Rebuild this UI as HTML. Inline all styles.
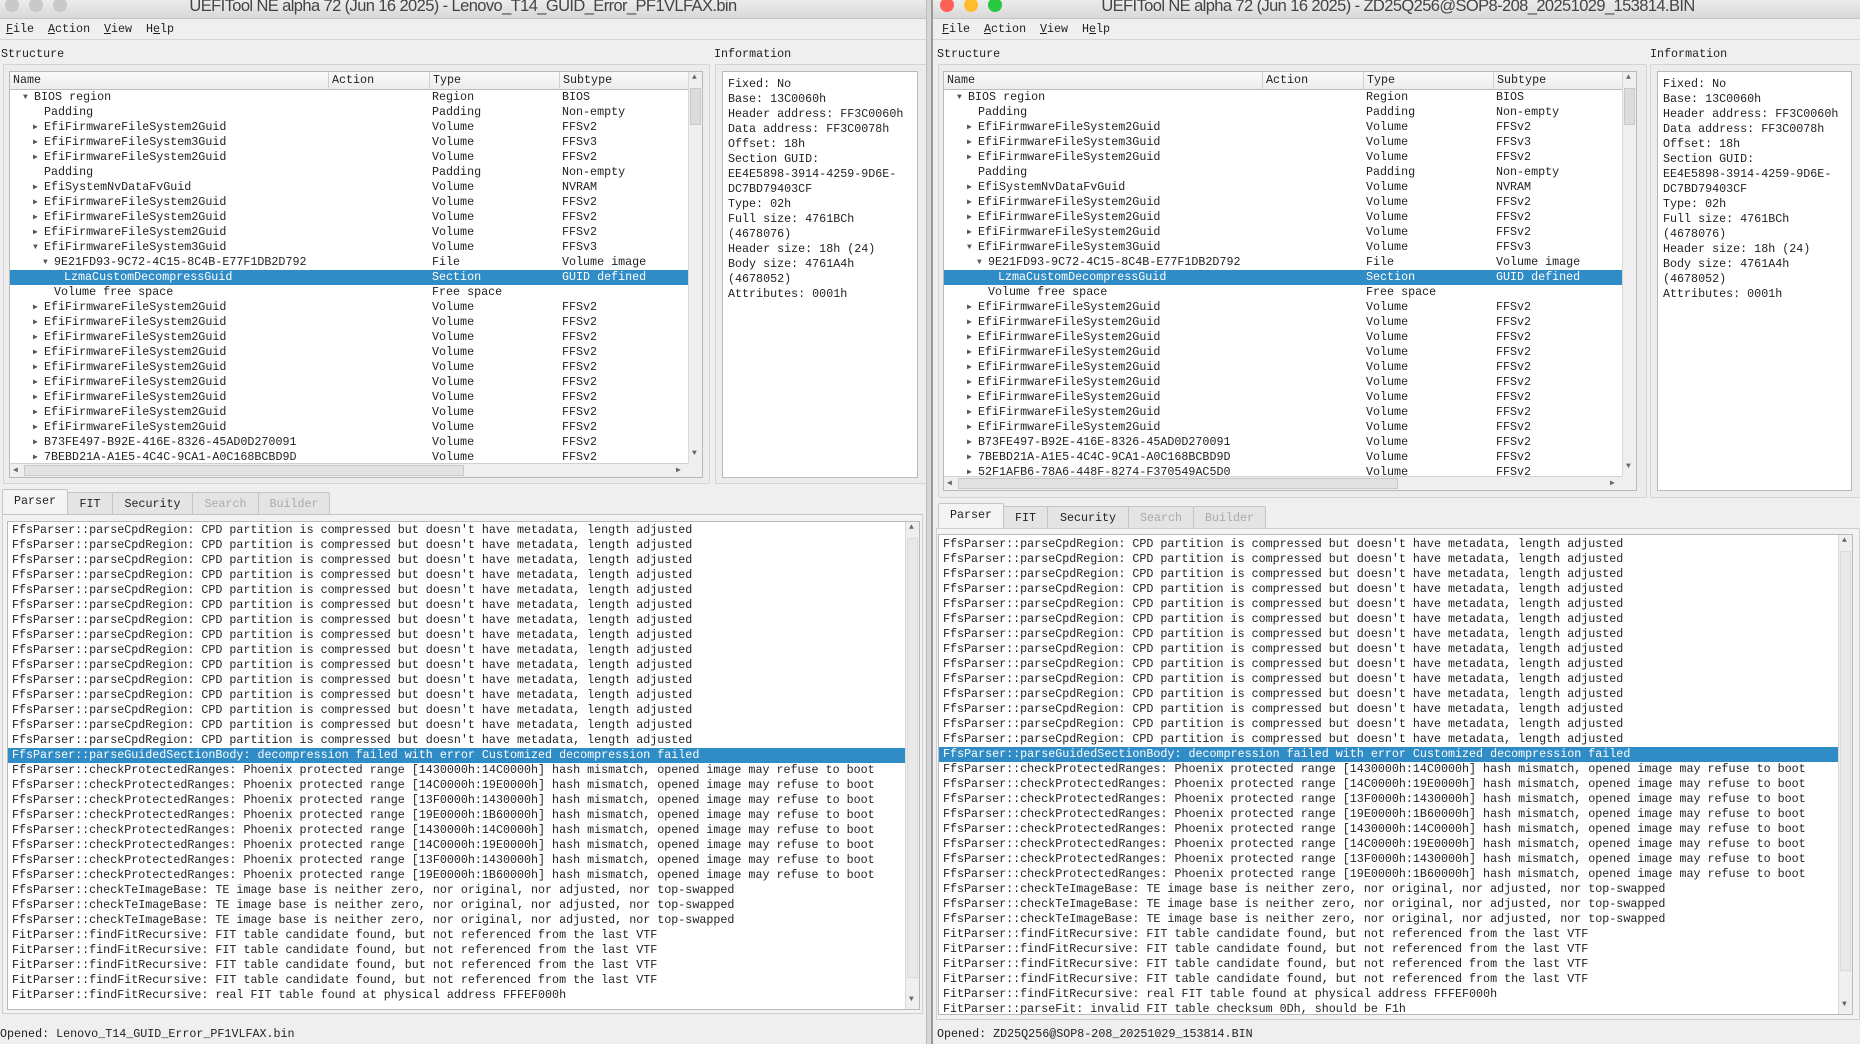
<!DOCTYPE html>
<html><head><meta charset="utf-8">
<style>
*{box-sizing:border-box;margin:0;padding:0}
body{width:1860px;height:1044px;overflow:hidden;background:#efefef;font-family:"Liberation Mono",monospace;font-size:11.7px;color:#222;position:relative}
.win{position:absolute;top:0;height:1044px;background:#efefef;overflow:hidden}
.tb{position:absolute;left:0;right:0;top:0;height:19px;background:linear-gradient(#ececec,#d8d8d8);border-bottom:1px solid #c4c4c4}
.tt{position:absolute;left:0;right:0;top:-3px;text-align:center;font-family:"Liberation Sans",sans-serif;font-size:16.5px;color:#444;letter-spacing:-0.6px;white-space:nowrap}
.dot{position:absolute;top:-2px;width:14px;height:14px;border-radius:50%;background:#c8c8c8}
.menu{position:absolute;left:0;right:0;top:19px;height:21px;border-bottom:1px solid #d6d6d6;line-height:21px}
.menu span{position:absolute;top:0}
.lbl{position:absolute;top:46px;line-height:16px}
.frame{position:absolute;border:1px solid #d4d4d4;border-radius:2px;background:#ececec}
.box{position:absolute;background:#fff;border:1px solid #b9b9b9;overflow:hidden}
.hdr{position:absolute;left:0;top:0;height:18px;background:linear-gradient(#fafafa,#ececec);border-bottom:1px solid #bdbdbd;line-height:17px}
.hdr span{position:absolute;top:0;height:18px;border-left:1px solid #d0d0d0;padding-left:3px}
.rows{position:absolute;left:0;top:18px}
.r{position:relative;height:15px;line-height:15px;white-space:pre}
.r span{position:absolute;top:0}
.r.sel{background:#308cc6;color:#fff}
.a{font-size:8px;color:#555}
.sel .a{color:#fff}
.vs{position:absolute;right:0;width:14px;background:#efefef;border-left:1px solid #d8d8d8}
.vs i{position:absolute;left:1px;right:1px;background:#dcdcdc;border:1px solid #c8c8c8}
.hs{position:absolute;left:0;height:14px;background:#efefef;border-top:1px solid #d0d0d0}
.hs i{position:absolute;top:1px;bottom:1px;background:#e2e2e2;border:1px solid #c8c8c8}
.ar{position:absolute;font-size:8px;color:#666}
.info{position:absolute;line-height:15px;white-space:pre}
.tab{position:absolute;height:23px;border:1px solid #c4c4c4;border-bottom:none;background:#e4e4e4;text-align:center;line-height:22px;border-radius:2px 2px 0 0}
.tab.on{background:#f4f4f4;height:26px}
.tab.dis{color:#aaa}
.log{position:absolute;line-height:15px;white-space:normal}
.log div{height:15px;white-space:pre;padding-left:4px}
.log .sel{background:#308cc6;color:#fff}
.st{position:absolute;top:1026px;line-height:16px;white-space:pre}
</style></head><body>

<!-- LEFT WINDOW -->
<div class="win" style="left:0;width:926px">
 <div class="tb"><div class="dot" style="left:5px"></div><div class="dot" style="left:29px"></div><div class="dot" style="left:53px"></div>
 <div class="tt" style="left:0;width:926px">UEFITool NE alpha 72 (Jun 16 2025) - Lenovo_T14_GUID_Error_PF1VLFAX.bin</div></div>
 <div class="menu"><span style="left:6px"><u>F</u>ile</span><span style="left:48px"><u>A</u>ction</span><span style="left:104px"><u>V</u>iew</span><span style="left:146px">H<u>e</u>lp</span></div>
 <div class="lbl" style="left:1px">Structure</div>
 <div class="lbl" style="left:714px">Information</div>
 <div class="frame" style="left:3px;top:64px;width:707px;height:420px"></div>
 <div class="frame" style="left:715px;top:64px;width:214px;height:420px"></div>
 <div class="box" style="left:9px;top:71px;width:694px;height:407px">
  <div class="hdr" style="width:678px"><span style="left:0;border:none">Name</span><span style="left:318px">Action</span><span style="left:419px">Type</span><span style="left:549px">Subtype</span></div>
  <div class="rows" style="width:678px">
   <div class="r"><span class="a" style="left:13px">▼</span><span style="left:24px">BIOS region</span><span style="left:422px">Region</span><span style="left:552px">BIOS</span></div>
   <div class="r"><span style="left:34px">Padding</span><span style="left:422px">Padding</span><span style="left:552px">Non-empty</span></div>
   <div class="r"><span class="a" style="left:23px">▶</span><span style="left:34px">EfiFirmwareFileSystem2Guid</span><span style="left:422px">Volume</span><span style="left:552px">FFSv2</span></div>
   <div class="r"><span class="a" style="left:23px">▶</span><span style="left:34px">EfiFirmwareFileSystem3Guid</span><span style="left:422px">Volume</span><span style="left:552px">FFSv3</span></div>
   <div class="r"><span class="a" style="left:23px">▶</span><span style="left:34px">EfiFirmwareFileSystem2Guid</span><span style="left:422px">Volume</span><span style="left:552px">FFSv2</span></div>
   <div class="r"><span style="left:34px">Padding</span><span style="left:422px">Padding</span><span style="left:552px">Non-empty</span></div>
   <div class="r"><span class="a" style="left:23px">▶</span><span style="left:34px">EfiSystemNvDataFvGuid</span><span style="left:422px">Volume</span><span style="left:552px">NVRAM</span></div>
   <div class="r"><span class="a" style="left:23px">▶</span><span style="left:34px">EfiFirmwareFileSystem2Guid</span><span style="left:422px">Volume</span><span style="left:552px">FFSv2</span></div>
   <div class="r"><span class="a" style="left:23px">▶</span><span style="left:34px">EfiFirmwareFileSystem2Guid</span><span style="left:422px">Volume</span><span style="left:552px">FFSv2</span></div>
   <div class="r"><span class="a" style="left:23px">▶</span><span style="left:34px">EfiFirmwareFileSystem2Guid</span><span style="left:422px">Volume</span><span style="left:552px">FFSv2</span></div>
   <div class="r"><span class="a" style="left:23px">▼</span><span style="left:34px">EfiFirmwareFileSystem3Guid</span><span style="left:422px">Volume</span><span style="left:552px">FFSv3</span></div>
   <div class="r"><span class="a" style="left:33px">▼</span><span style="left:44px">9E21FD93-9C72-4C15-8C4B-E77F1DB2D792</span><span style="left:422px">File</span><span style="left:552px">Volume image</span></div>
   <div class="r sel"><span style="left:54px">LzmaCustomDecompressGuid</span><span style="left:422px">Section</span><span style="left:552px">GUID defined</span></div>
   <div class="r"><span style="left:44px">Volume free space</span><span style="left:422px">Free space</span></div>
   <div class="r"><span class="a" style="left:23px">▶</span><span style="left:34px">EfiFirmwareFileSystem2Guid</span><span style="left:422px">Volume</span><span style="left:552px">FFSv2</span></div>
   <div class="r"><span class="a" style="left:23px">▶</span><span style="left:34px">EfiFirmwareFileSystem2Guid</span><span style="left:422px">Volume</span><span style="left:552px">FFSv2</span></div>
   <div class="r"><span class="a" style="left:23px">▶</span><span style="left:34px">EfiFirmwareFileSystem2Guid</span><span style="left:422px">Volume</span><span style="left:552px">FFSv2</span></div>
   <div class="r"><span class="a" style="left:23px">▶</span><span style="left:34px">EfiFirmwareFileSystem2Guid</span><span style="left:422px">Volume</span><span style="left:552px">FFSv2</span></div>
   <div class="r"><span class="a" style="left:23px">▶</span><span style="left:34px">EfiFirmwareFileSystem2Guid</span><span style="left:422px">Volume</span><span style="left:552px">FFSv2</span></div>
   <div class="r"><span class="a" style="left:23px">▶</span><span style="left:34px">EfiFirmwareFileSystem2Guid</span><span style="left:422px">Volume</span><span style="left:552px">FFSv2</span></div>
   <div class="r"><span class="a" style="left:23px">▶</span><span style="left:34px">EfiFirmwareFileSystem2Guid</span><span style="left:422px">Volume</span><span style="left:552px">FFSv2</span></div>
   <div class="r"><span class="a" style="left:23px">▶</span><span style="left:34px">EfiFirmwareFileSystem2Guid</span><span style="left:422px">Volume</span><span style="left:552px">FFSv2</span></div>
   <div class="r"><span class="a" style="left:23px">▶</span><span style="left:34px">EfiFirmwareFileSystem2Guid</span><span style="left:422px">Volume</span><span style="left:552px">FFSv2</span></div>
   <div class="r"><span class="a" style="left:23px">▶</span><span style="left:34px">B73FE497-B92E-416E-8326-45AD0D270091</span><span style="left:422px">Volume</span><span style="left:552px">FFSv2</span></div>
   <div class="r"><span class="a" style="left:23px">▶</span><span style="left:34px">7BEBD21A-A1E5-4C4C-9CA1-A0C168BCBD9D</span><span style="left:422px">Volume</span><span style="left:552px">FFSv2</span></div>
  </div>
  <div class="hs" style="top:391px;width:678px"><i style="left:14px;width:440px"></i><span class="ar" style="left:3px;top:1px">◀</span><span class="ar" style="left:666px;top:1px">▶</span></div>
  <div class="vs" style="top:0;height:391px"><i style="top:16px;height:37px"></i><span class="ar" style="left:3px;top:1px">▲</span><span class="ar" style="left:3px;top:377px">▼</span></div>
  <div style="position:absolute;right:0;bottom:0;width:14px;height:14px;background:#efefef"></div>
 </div>
 <div class="box" style="left:722px;top:71px;width:196px;height:407px">
  <div class="info" style="left:5px;top:5px">Fixed: No
Base: 13C0060h
Header address: FF3C0060h
Data address: FF3C0078h
Offset: 18h
Section GUID:
EE4E5898-3914-4259-9D6E-
DC7BD79403CF
Type: 02h
Full size: 4761BCh
(4678076)
Header size: 18h (24)
Body size: 4761A4h
(4678052)
Attributes: 0001h</div>
 </div>
 <div class="tab on" style="left:2px;top:489px;width:66px">Parser</div>
 <div class="tab" style="left:67px;top:492px;width:46px">FIT</div>
 <div class="tab" style="left:112px;top:492px;width:81px">Security</div>
 <div class="tab dis" style="left:192px;top:492px;width:67px">Search</div>
 <div class="tab dis" style="left:258px;top:492px;width:72px">Builder</div>
 <div style="position:absolute;left:2px;right:3px;top:514px;height:500px;border:1px solid #cfcfcf;border-top:1px solid #c4c4c4;background:#f2f2f2"></div>
 <div class="box" style="left:7px;top:521px;width:913px;height:489px">
  <div class="log" style="left:0;top:1px;width:897px">
<div>FfsParser::parseCpdRegion: CPD partition is compressed but doesn't have metadata, length adjusted</div>
<div>FfsParser::parseCpdRegion: CPD partition is compressed but doesn't have metadata, length adjusted</div>
<div>FfsParser::parseCpdRegion: CPD partition is compressed but doesn't have metadata, length adjusted</div>
<div>FfsParser::parseCpdRegion: CPD partition is compressed but doesn't have metadata, length adjusted</div>
<div>FfsParser::parseCpdRegion: CPD partition is compressed but doesn't have metadata, length adjusted</div>
<div>FfsParser::parseCpdRegion: CPD partition is compressed but doesn't have metadata, length adjusted</div>
<div>FfsParser::parseCpdRegion: CPD partition is compressed but doesn't have metadata, length adjusted</div>
<div>FfsParser::parseCpdRegion: CPD partition is compressed but doesn't have metadata, length adjusted</div>
<div>FfsParser::parseCpdRegion: CPD partition is compressed but doesn't have metadata, length adjusted</div>
<div>FfsParser::parseCpdRegion: CPD partition is compressed but doesn't have metadata, length adjusted</div>
<div>FfsParser::parseCpdRegion: CPD partition is compressed but doesn't have metadata, length adjusted</div>
<div>FfsParser::parseCpdRegion: CPD partition is compressed but doesn't have metadata, length adjusted</div>
<div>FfsParser::parseCpdRegion: CPD partition is compressed but doesn't have metadata, length adjusted</div>
<div>FfsParser::parseCpdRegion: CPD partition is compressed but doesn't have metadata, length adjusted</div>
<div>FfsParser::parseCpdRegion: CPD partition is compressed but doesn't have metadata, length adjusted</div>
<div class="sel">FfsParser::parseGuidedSectionBody: decompression failed with error Customized decompression failed</div>
<div>FfsParser::checkProtectedRanges: Phoenix protected range [1430000h:14C0000h] hash mismatch, opened image may refuse to boot</div>
<div>FfsParser::checkProtectedRanges: Phoenix protected range [14C0000h:19E0000h] hash mismatch, opened image may refuse to boot</div>
<div>FfsParser::checkProtectedRanges: Phoenix protected range [13F0000h:1430000h] hash mismatch, opened image may refuse to boot</div>
<div>FfsParser::checkProtectedRanges: Phoenix protected range [19E0000h:1B60000h] hash mismatch, opened image may refuse to boot</div>
<div>FfsParser::checkProtectedRanges: Phoenix protected range [1430000h:14C0000h] hash mismatch, opened image may refuse to boot</div>
<div>FfsParser::checkProtectedRanges: Phoenix protected range [14C0000h:19E0000h] hash mismatch, opened image may refuse to boot</div>
<div>FfsParser::checkProtectedRanges: Phoenix protected range [13F0000h:1430000h] hash mismatch, opened image may refuse to boot</div>
<div>FfsParser::checkProtectedRanges: Phoenix protected range [19E0000h:1B60000h] hash mismatch, opened image may refuse to boot</div>
<div>FfsParser::checkTeImageBase: TE image base is neither zero, nor original, nor adjusted, nor top-swapped</div>
<div>FfsParser::checkTeImageBase: TE image base is neither zero, nor original, nor adjusted, nor top-swapped</div>
<div>FfsParser::checkTeImageBase: TE image base is neither zero, nor original, nor adjusted, nor top-swapped</div>
<div>FitParser::findFitRecursive: FIT table candidate found, but not referenced from the last VTF</div>
<div>FitParser::findFitRecursive: FIT table candidate found, but not referenced from the last VTF</div>
<div>FitParser::findFitRecursive: FIT table candidate found, but not referenced from the last VTF</div>
<div>FitParser::findFitRecursive: FIT table candidate found, but not referenced from the last VTF</div>
<div>FitParser::findFitRecursive: real FIT table found at physical address FFFEF000h</div>
  </div>
  <div class="vs" style="top:0;height:487px"><i style="top:16px;height:440px;background:#e8e8e8;border-color:#dadada"></i><span class="ar" style="left:3px;top:1px">▲</span><span class="ar" style="left:3px;top:473px">▼</span></div>
 </div>
 <div class="st" style="left:0">Opened: Lenovo_T14_GUID_Error_PF1VLFAX.bin</div>
</div>

<div style="position:absolute;left:926px;top:0;width:7px;height:1044px;background:#d6d6d6;border-left:1px solid #bbb;border-right:2px solid #9a9a9a"></div>

<!-- RIGHT WINDOW -->
<div class="win" style="left:933px;width:927px">
 <div class="tb"><div class="dot" style="left:7px;background:#fe5f57"></div><div class="dot" style="left:31px;background:#febc2e"></div><div class="dot" style="left:55px;background:#28c840"></div>
 <div class="tt" style="left:0;width:930px">UEFITool NE alpha 72 (Jun 16 2025) - ZD25Q256@SOP8-208_20251029_153814.BIN</div></div>
 <div class="menu"><span style="left:9px"><u>F</u>ile</span><span style="left:51px"><u>A</u>ction</span><span style="left:107px"><u>V</u>iew</span><span style="left:149px">H<u>e</u>lp</span></div>
 <div class="lbl" style="left:4px">Structure</div>
 <div class="lbl" style="left:717px">Information</div>
 <div class="frame" style="left:5px;top:64px;width:709px;height:434px"></div>
 <div class="frame" style="left:717px;top:64px;width:212px;height:434px"></div>
 <div class="box" style="left:10px;top:71px;width:694px;height:420px">
  <div class="hdr" style="width:678px"><span style="left:0;border:none">Name</span><span style="left:318px">Action</span><span style="left:419px">Type</span><span style="left:549px">Subtype</span></div>
  <div class="rows" style="width:678px">
   <div class="r"><span class="a" style="left:13px">▼</span><span style="left:24px">BIOS region</span><span style="left:422px">Region</span><span style="left:552px">BIOS</span></div>
   <div class="r"><span style="left:34px">Padding</span><span style="left:422px">Padding</span><span style="left:552px">Non-empty</span></div>
   <div class="r"><span class="a" style="left:23px">▶</span><span style="left:34px">EfiFirmwareFileSystem2Guid</span><span style="left:422px">Volume</span><span style="left:552px">FFSv2</span></div>
   <div class="r"><span class="a" style="left:23px">▶</span><span style="left:34px">EfiFirmwareFileSystem3Guid</span><span style="left:422px">Volume</span><span style="left:552px">FFSv3</span></div>
   <div class="r"><span class="a" style="left:23px">▶</span><span style="left:34px">EfiFirmwareFileSystem2Guid</span><span style="left:422px">Volume</span><span style="left:552px">FFSv2</span></div>
   <div class="r"><span style="left:34px">Padding</span><span style="left:422px">Padding</span><span style="left:552px">Non-empty</span></div>
   <div class="r"><span class="a" style="left:23px">▶</span><span style="left:34px">EfiSystemNvDataFvGuid</span><span style="left:422px">Volume</span><span style="left:552px">NVRAM</span></div>
   <div class="r"><span class="a" style="left:23px">▶</span><span style="left:34px">EfiFirmwareFileSystem2Guid</span><span style="left:422px">Volume</span><span style="left:552px">FFSv2</span></div>
   <div class="r"><span class="a" style="left:23px">▶</span><span style="left:34px">EfiFirmwareFileSystem2Guid</span><span style="left:422px">Volume</span><span style="left:552px">FFSv2</span></div>
   <div class="r"><span class="a" style="left:23px">▶</span><span style="left:34px">EfiFirmwareFileSystem2Guid</span><span style="left:422px">Volume</span><span style="left:552px">FFSv2</span></div>
   <div class="r"><span class="a" style="left:23px">▼</span><span style="left:34px">EfiFirmwareFileSystem3Guid</span><span style="left:422px">Volume</span><span style="left:552px">FFSv3</span></div>
   <div class="r"><span class="a" style="left:33px">▼</span><span style="left:44px">9E21FD93-9C72-4C15-8C4B-E77F1DB2D792</span><span style="left:422px">File</span><span style="left:552px">Volume image</span></div>
   <div class="r sel"><span style="left:54px">LzmaCustomDecompressGuid</span><span style="left:422px">Section</span><span style="left:552px">GUID defined</span></div>
   <div class="r"><span style="left:44px">Volume free space</span><span style="left:422px">Free space</span></div>
   <div class="r"><span class="a" style="left:23px">▶</span><span style="left:34px">EfiFirmwareFileSystem2Guid</span><span style="left:422px">Volume</span><span style="left:552px">FFSv2</span></div>
   <div class="r"><span class="a" style="left:23px">▶</span><span style="left:34px">EfiFirmwareFileSystem2Guid</span><span style="left:422px">Volume</span><span style="left:552px">FFSv2</span></div>
   <div class="r"><span class="a" style="left:23px">▶</span><span style="left:34px">EfiFirmwareFileSystem2Guid</span><span style="left:422px">Volume</span><span style="left:552px">FFSv2</span></div>
   <div class="r"><span class="a" style="left:23px">▶</span><span style="left:34px">EfiFirmwareFileSystem2Guid</span><span style="left:422px">Volume</span><span style="left:552px">FFSv2</span></div>
   <div class="r"><span class="a" style="left:23px">▶</span><span style="left:34px">EfiFirmwareFileSystem2Guid</span><span style="left:422px">Volume</span><span style="left:552px">FFSv2</span></div>
   <div class="r"><span class="a" style="left:23px">▶</span><span style="left:34px">EfiFirmwareFileSystem2Guid</span><span style="left:422px">Volume</span><span style="left:552px">FFSv2</span></div>
   <div class="r"><span class="a" style="left:23px">▶</span><span style="left:34px">EfiFirmwareFileSystem2Guid</span><span style="left:422px">Volume</span><span style="left:552px">FFSv2</span></div>
   <div class="r"><span class="a" style="left:23px">▶</span><span style="left:34px">EfiFirmwareFileSystem2Guid</span><span style="left:422px">Volume</span><span style="left:552px">FFSv2</span></div>
   <div class="r"><span class="a" style="left:23px">▶</span><span style="left:34px">EfiFirmwareFileSystem2Guid</span><span style="left:422px">Volume</span><span style="left:552px">FFSv2</span></div>
   <div class="r"><span class="a" style="left:23px">▶</span><span style="left:34px">B73FE497-B92E-416E-8326-45AD0D270091</span><span style="left:422px">Volume</span><span style="left:552px">FFSv2</span></div>
   <div class="r"><span class="a" style="left:23px">▶</span><span style="left:34px">7BEBD21A-A1E5-4C4C-9CA1-A0C168BCBD9D</span><span style="left:422px">Volume</span><span style="left:552px">FFSv2</span></div>
   <div class="r"><span class="a" style="left:23px">▶</span><span style="left:34px">52F1AFB6-78A6-448F-8274-F370549AC5D0</span><span style="left:422px">Volume</span><span style="left:552px">FFSv2</span></div>
  </div>
  <div class="hs" style="top:404px;width:678px"><i style="left:14px;width:440px"></i><span class="ar" style="left:3px;top:1px">◀</span><span class="ar" style="left:666px;top:1px">▶</span></div>
  <div class="vs" style="top:0;height:404px"><i style="top:16px;height:37px"></i><span class="ar" style="left:3px;top:1px">▲</span><span class="ar" style="left:3px;top:390px">▼</span></div>
  <div style="position:absolute;right:0;bottom:0;width:14px;height:14px;background:#efefef"></div>
 </div>
 <div class="box" style="left:724px;top:71px;width:195px;height:420px">
  <div class="info" style="left:5px;top:5px">Fixed: No
Base: 13C0060h
Header address: FF3C0060h
Data address: FF3C0078h
Offset: 18h
Section GUID:
EE4E5898-3914-4259-9D6E-
DC7BD79403CF
Type: 02h
Full size: 4761BCh
(4678076)
Header size: 18h (24)
Body size: 4761A4h
(4678052)
Attributes: 0001h</div>
 </div>
 <div class="tab on" style="left:5px;top:503px;width:66px">Parser</div>
 <div class="tab" style="left:70px;top:506px;width:45px">FIT</div>
 <div class="tab" style="left:114px;top:506px;width:82px">Security</div>
 <div class="tab dis" style="left:195px;top:506px;width:66px">Search</div>
 <div class="tab dis" style="left:260px;top:506px;width:73px">Builder</div>
 <div style="position:absolute;left:3px;right:0;top:528px;height:492px;border:1px solid #cfcfcf;background:#f2f2f2"></div>
 <div class="box" style="left:5px;top:534px;width:915px;height:481px">
  <div class="log" style="left:0;top:2px;width:899px">
<div>FfsParser::parseCpdRegion: CPD partition is compressed but doesn't have metadata, length adjusted</div>
<div>FfsParser::parseCpdRegion: CPD partition is compressed but doesn't have metadata, length adjusted</div>
<div>FfsParser::parseCpdRegion: CPD partition is compressed but doesn't have metadata, length adjusted</div>
<div>FfsParser::parseCpdRegion: CPD partition is compressed but doesn't have metadata, length adjusted</div>
<div>FfsParser::parseCpdRegion: CPD partition is compressed but doesn't have metadata, length adjusted</div>
<div>FfsParser::parseCpdRegion: CPD partition is compressed but doesn't have metadata, length adjusted</div>
<div>FfsParser::parseCpdRegion: CPD partition is compressed but doesn't have metadata, length adjusted</div>
<div>FfsParser::parseCpdRegion: CPD partition is compressed but doesn't have metadata, length adjusted</div>
<div>FfsParser::parseCpdRegion: CPD partition is compressed but doesn't have metadata, length adjusted</div>
<div>FfsParser::parseCpdRegion: CPD partition is compressed but doesn't have metadata, length adjusted</div>
<div>FfsParser::parseCpdRegion: CPD partition is compressed but doesn't have metadata, length adjusted</div>
<div>FfsParser::parseCpdRegion: CPD partition is compressed but doesn't have metadata, length adjusted</div>
<div>FfsParser::parseCpdRegion: CPD partition is compressed but doesn't have metadata, length adjusted</div>
<div>FfsParser::parseCpdRegion: CPD partition is compressed but doesn't have metadata, length adjusted</div>
<div class="sel">FfsParser::parseGuidedSectionBody: decompression failed with error Customized decompression failed</div>
<div>FfsParser::checkProtectedRanges: Phoenix protected range [1430000h:14C0000h] hash mismatch, opened image may refuse to boot</div>
<div>FfsParser::checkProtectedRanges: Phoenix protected range [14C0000h:19E0000h] hash mismatch, opened image may refuse to boot</div>
<div>FfsParser::checkProtectedRanges: Phoenix protected range [13F0000h:1430000h] hash mismatch, opened image may refuse to boot</div>
<div>FfsParser::checkProtectedRanges: Phoenix protected range [19E0000h:1B60000h] hash mismatch, opened image may refuse to boot</div>
<div>FfsParser::checkProtectedRanges: Phoenix protected range [1430000h:14C0000h] hash mismatch, opened image may refuse to boot</div>
<div>FfsParser::checkProtectedRanges: Phoenix protected range [14C0000h:19E0000h] hash mismatch, opened image may refuse to boot</div>
<div>FfsParser::checkProtectedRanges: Phoenix protected range [13F0000h:1430000h] hash mismatch, opened image may refuse to boot</div>
<div>FfsParser::checkProtectedRanges: Phoenix protected range [19E0000h:1B60000h] hash mismatch, opened image may refuse to boot</div>
<div>FfsParser::checkTeImageBase: TE image base is neither zero, nor original, nor adjusted, nor top-swapped</div>
<div>FfsParser::checkTeImageBase: TE image base is neither zero, nor original, nor adjusted, nor top-swapped</div>
<div>FfsParser::checkTeImageBase: TE image base is neither zero, nor original, nor adjusted, nor top-swapped</div>
<div>FitParser::findFitRecursive: FIT table candidate found, but not referenced from the last VTF</div>
<div>FitParser::findFitRecursive: FIT table candidate found, but not referenced from the last VTF</div>
<div>FitParser::findFitRecursive: FIT table candidate found, but not referenced from the last VTF</div>
<div>FitParser::findFitRecursive: FIT table candidate found, but not referenced from the last VTF</div>
<div>FitParser::findFitRecursive: real FIT table found at physical address FFFEF000h</div>
<div>FitParser::parseFit: invalid FIT table checksum 0Dh, should be F1h</div>
  </div>
  <div class="vs" style="top:0;height:479px"><i style="top:16px;height:420px;background:#e8e8e8;border-color:#dadada"></i><span class="ar" style="left:3px;top:1px">▲</span><span class="ar" style="left:3px;top:465px">▼</span></div>
 </div>
 <div class="st" style="left:4px">Opened: ZD25Q256@SOP8-208_20251029_153814.BIN</div>
</div>
</body></html>
